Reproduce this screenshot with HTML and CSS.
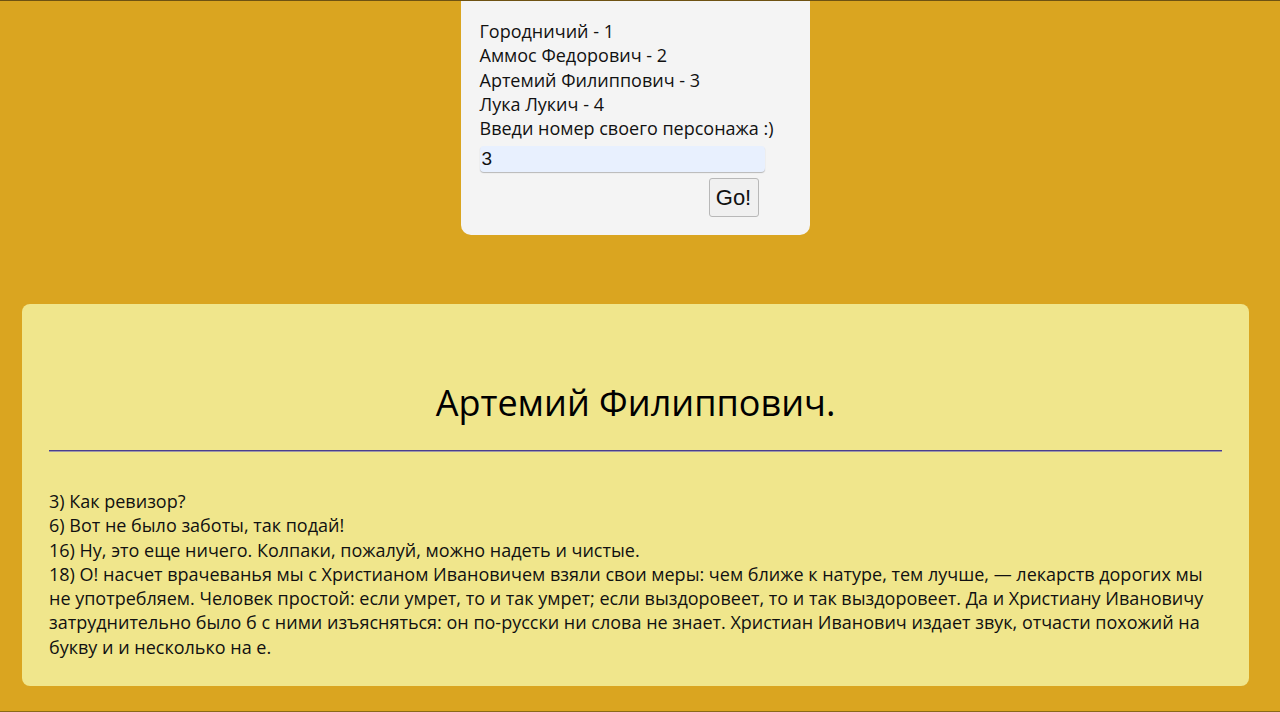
FILE: index.html
```html
<!DOCTYPE html>
<html lang="ru">
<head>
<meta charset="utf-8">
<title>Ревизор</title>
<link rel="stylesheet" href="styles.css">
</head>
<body>
<div class="page">
  <div class="top">
    <form class="chooser">
      <div class="list">
        <div>Городничий - 1</div>
        <div>Аммос Федорович - 2</div>
        <div>Артемий Филиппович - 3</div>
        <div>Лука Лукич - 4</div>
        <div>Введи номер своего персонажа :)</div>
      </div>
      <input class="num" type="text" value="3">
      <div class="actions"><button class="go" type="button">Go!</button></div>
    </form>
  </div>
  <section class="role">
    <h1 class="title">Артемий Филиппович.</h1>
    <hr class="rule">
    <div class="lines">
      <div>3) Как ревизор?</div>
      <div>6) Вот не было заботы, так подай!</div>
      <div>16) Ну, это еще ничего. Колпаки, пожалуй, можно надеть и чистые.</div>
      <div>18) О! насчет врачеванья мы с Христианом Ивановичем взяли свои меры: чем ближе к натуре, тем лучше, — лекарств дорогих мы не употребляем. Человек простой: если умрет, то и так умрет; если выздоровеет, то и так выздоровеет. Да и Христиану Ивановичу затруднительно было б с ними изъясняться: он по-русски ни слова не знает. Христиан Иванович издает звук, отчасти похожий на букву и и несколько на е.</div>
    </div>
  </section>
</div>
</body>
</html>
```
FILE: styles.css
```css
html, body {
  margin: 0;
  padding: 0;
  background: #daa520;
}
body {
  font-family: "Open Sans", "Noto Sans", sans-serif;
  font-size: 18px;
  color: #111;
}
.page {
  box-sizing: border-box;
  height: 712px;
  border-top: 1px solid #6e5212;
  border-bottom: 1px solid #8a6a18;
  padding: 0 31px 0 22px;
  overflow: hidden;
}
.top {
  display: flex;
  justify-content: center;
}
.chooser {
  box-sizing: border-box;
  width: 349px;
  height: 235px;
  margin-top: -1px;
  margin-left: -1px;
  background: #f4f4f4;
  border-radius: 0 0 10px 10px;
  padding: 19px 19px 0 19px;
}
.list {
  line-height: 24.3px;
}
.num {
  display: block;
  box-sizing: border-box;
  width: 285px;
  height: 26px;
  margin-top: 6px;
  border: none;
  border-radius: 4px;
  background: #e8f0fe;
  box-shadow: 0 1px 1px rgba(0,0,0,0.25);
  font-family: "Liberation Sans", Arial, sans-serif;
  font-size: 19px;
  padding: 0 2px;
  color: #111;
}
.actions {
  display: flex;
  justify-content: flex-end;
  width: 279px;
  margin-top: 6px;
}
.go {
  width: 50px;
  height: 39px;
  font-family: "Liberation Sans", Arial, sans-serif;
  font-size: 22px;
  color: #111;
  background: #f0f0f0;
  border: 1px solid #b8b8b8;
  border-radius: 3px;
  padding: 0;
}
.role {
  margin-top: 69px;
  background: #f0e68c;
  border-radius: 8px;
  height: 382px;
  box-sizing: border-box;
  padding: 60px 27px 0 27px;
}
.title {
  margin: 0;
  text-align: center;
  font-weight: 400;
  font-size: 36px;
  line-height: 78px;
  color: #000;
}
.rule {
  margin: 8px 0 0 0;
  border: none;
  height: 1px;
  background: #4a3f8c;
  border-bottom: 1px solid #9e96a8;
}
.lines {
  margin-top: 37px;
  line-height: 24.3px;
}
```
